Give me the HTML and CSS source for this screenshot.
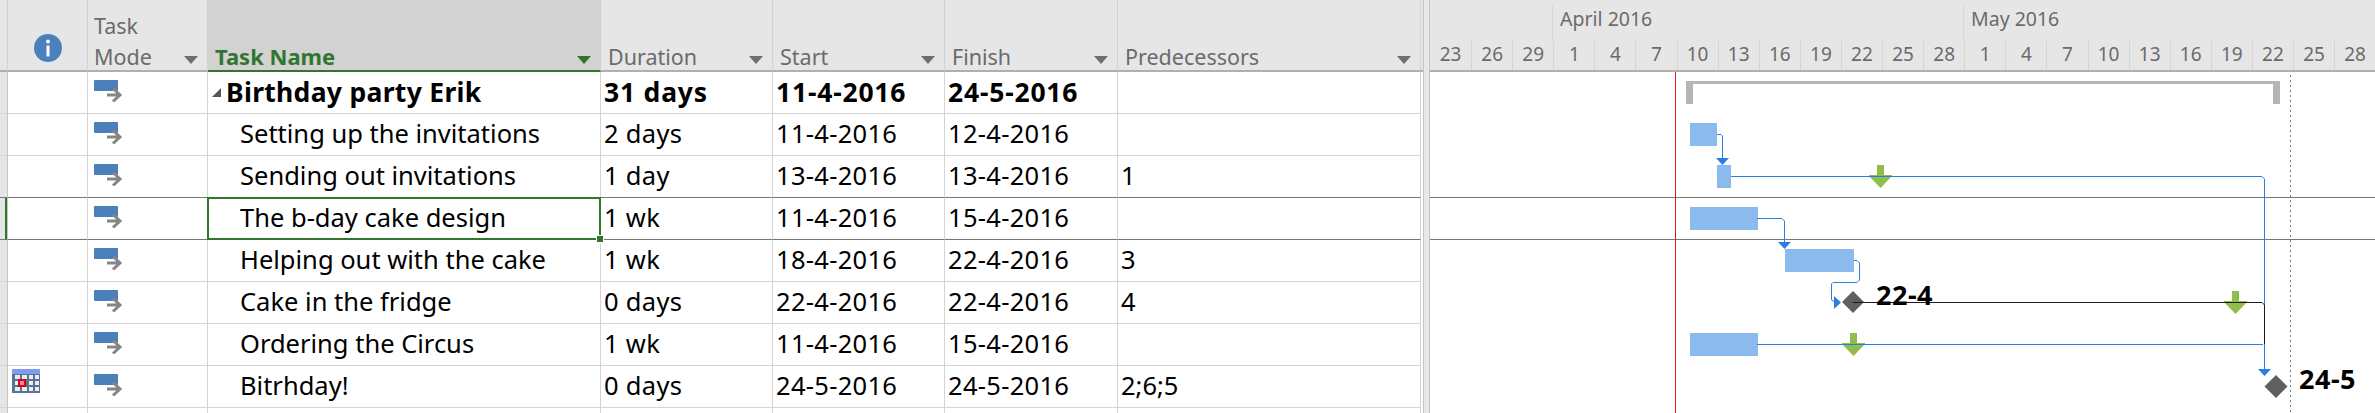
FILE: index.html
```html
<!DOCTYPE html>
<html lang="en">
<head>
<meta charset="utf-8">
<title>Birthday party Erik</title>
<link rel="stylesheet" href="styles.css">
</head>
<body>
<svg class="defs" width="0" height="0" aria-hidden="true">
  <symbol id="mode" viewBox="0 0 30 22">
    <rect x="0" y="0" width="24" height="11" rx="1" fill="#4a7fb9"/>
    <path d="M13 15H25M19 8.500L26 15L19 21.500" fill="none" stroke="#868686" stroke-width="3"/>
  </symbol>
</svg>
<main class="app">
  <section class="sheet">
    <div class="row head">
      <div class="cell gut"></div>
      <div class="cell info"><svg width="28" height="28" viewBox="0 0 28 28"><circle cx="14" cy="14" r="14" fill="#4a80bb"/><circle cx="14" cy="7.500" r="2" fill="#fff"/><rect x="12.500" y="11.500" width="3" height="11" fill="#fff"/></svg></div>
      <div class="cell hc mode-h"><span>Task<br>Mode</span><i class="tri"></i></div>
      <div class="cell hc name-h"><span>Task Name</span><i class="tri"></i></div>
      <div class="cell hc"><span>Duration</span><i class="tri"></i></div>
      <div class="cell hc"><span>Start</span><i class="tri"></i></div>
      <div class="cell hc"><span>Finish</span><i class="tri"></i></div>
      <div class="cell hc"><span>Predecessors</span><i class="tri"></i></div>
    </div>
    <div class="row summary">
      <div class="cell gut"></div><div class="cell"></div>
      <div class="cell m"><svg class="mi"><use href="#mode"/></svg></div>
      <div class="cell n sum-n"><i class="collapse"></i>Birthday party Erik</div>
      <div class="cell d">31 days</div><div class="cell d">11-4-2016</div><div class="cell d">24-5-2016</div><div class="cell p"></div>
    </div>
    <div class="row">
      <div class="cell gut"></div><div class="cell"></div>
      <div class="cell m"><svg class="mi"><use href="#mode"/></svg></div>
      <div class="cell n">Setting up the invitations</div>
      <div class="cell d">2 days</div><div class="cell d">11-4-2016</div><div class="cell d">12-4-2016</div><div class="cell p"></div>
    </div>
    <div class="row before-sel">
      <div class="cell gut"></div><div class="cell"></div>
      <div class="cell m"><svg class="mi"><use href="#mode"/></svg></div>
      <div class="cell n">Sending out invitations</div>
      <div class="cell d">1 day</div><div class="cell d">13-4-2016</div><div class="cell d">13-4-2016</div><div class="cell p">1</div>
    </div>
    <div class="row sel">
      <div class="cell gut"></div><div class="cell"></div>
      <div class="cell m"><svg class="mi"><use href="#mode"/></svg></div>
      <div class="cell n active">The b-day cake design</div>
      <div class="cell d">1 wk</div><div class="cell d">11-4-2016</div><div class="cell d">15-4-2016</div><div class="cell p"></div>
    </div>
    <div class="row">
      <div class="cell gut"></div><div class="cell"></div>
      <div class="cell m"><svg class="mi"><use href="#mode"/></svg></div>
      <div class="cell n">Helping out with the cake</div>
      <div class="cell d">1 wk</div><div class="cell d">18-4-2016</div><div class="cell d">22-4-2016</div><div class="cell p">3</div>
    </div>
    <div class="row">
      <div class="cell gut"></div><div class="cell"></div>
      <div class="cell m"><svg class="mi"><use href="#mode"/></svg></div>
      <div class="cell n">Cake in the fridge</div>
      <div class="cell d">0 days</div><div class="cell d">22-4-2016</div><div class="cell d">22-4-2016</div><div class="cell p">4</div>
    </div>
    <div class="row">
      <div class="cell gut"></div><div class="cell"></div>
      <div class="cell m"><svg class="mi"><use href="#mode"/></svg></div>
      <div class="cell n">Ordering the Circus</div>
      <div class="cell d">1 wk</div><div class="cell d">11-4-2016</div><div class="cell d">15-4-2016</div><div class="cell p"></div>
    </div>
    <div class="row">
      <div class="cell gut"></div>
      <div class="cell cal"><svg width="28" height="24" viewBox="0 0 28 24"><rect width="28" height="24" fill="#5c7390"/><rect width="28" height="5" fill="#7c9df0"/><g fill="#e9eef6"><rect x="3" y="6" width="5" height="4"/><rect x="10" y="6" width="5" height="4"/><rect x="17" y="6" width="4" height="4"/><rect x="23" y="6" width="4" height="4"/><rect x="3" y="12" width="3" height="4"/><rect x="17" y="12" width="4" height="4"/><rect x="23" y="12" width="4" height="4"/><rect x="3" y="18" width="5" height="4"/><rect x="10" y="18" width="5" height="4"/><rect x="17" y="18" width="4" height="4"/><rect x="23" y="18" width="4" height="4"/></g><rect x="6" y="10" width="8" height="8" fill="#d8001c"/><rect x="8" y="12" width="4" height="4" fill="#f58a8a"/></svg></div>
      <div class="cell m"><svg class="mi"><use href="#mode"/></svg></div>
      <div class="cell n">Bitrhday!</div>
      <div class="cell d">0 days</div><div class="cell d">24-5-2016</div><div class="cell d">24-5-2016</div><div class="cell p">2;6;5</div>
    </div>
    <div class="row">
      <div class="cell gut"></div><div class="cell"></div><div class="cell"></div><div class="cell"></div><div class="cell"></div><div class="cell"></div><div class="cell"></div><div class="cell"></div>
    </div>
  </section>
  <div class="divider"></div>
  <section class="gantt">
    <div class="scale">
      <div class="months">
        <div class="month blank"></div>
        <div class="month">April 2016</div>
        <div class="month">May 2016</div>
      </div>
      <div class="days">
        <span>23</span><span>26</span><span>29</span><span class="first">1</span><span>4</span><span>7</span><span>10</span><span>13</span><span>16</span><span>19</span><span>22</span><span>25</span><span>28</span><span class="first">1</span><span>4</span><span>7</span><span>10</span><span>13</span><span>16</span><span>19</span><span>22</span><span>25</span><span>28</span>
      </div>
    </div>
    <svg class="chart" width="945" height="341" viewBox="1430 72 945 341">
      <rect x="1430" y="197" width="945" height="1" fill="#767676"/>
      <rect x="1430" y="239" width="945" height="1" fill="#767676"/>
      <line x1="2290.500" y1="75" x2="2290.500" y2="413" stroke="#777" stroke-width="1" stroke-dasharray="2 3"/>
      <rect x="1675" y="72" width="1" height="341" fill="#e81a1a"/>

      <path d="M1686 104V81H2280V104H2273V84H1693V104Z" fill="#b5b5b5"/>

      <g fill="#8bbbed">
        <rect x="1690" y="123" width="27" height="23"/>
        <rect x="1717" y="165" width="14" height="23"/>
        <rect x="1690" y="207" width="68" height="23"/>
        <rect x="1785" y="249" width="69" height="23"/>
        <rect x="1690" y="333" width="68" height="23"/>
      </g>

      <g fill="#8fbe4c">
        <path d="M1877 165h7v10h8v1l-11.500 12-11.500-12v-1h8z"/>
        <path d="M1850 333h7v10h8v1l-11.500 12-11.500-12v-1h8z"/>
        <path d="M2232 291h7v10h8v1l-11.500 12-11.500-12v-1h8z"/>
      </g>

      <g fill="none" stroke="#2a7fdc" stroke-width="1">
        <path d="M1717 134.500H1721L1722.500 136V160"/>
        <path d="M1731 176.500H2262L2264.500 179V372"/>
        <path d="M1757 218.500H1782L1784.500 221V244"/>
        <path d="M1854 260.500H1857L1859.500 263V280L1857 282.500H1833L1831.500 284V300L1836 302.500"/>
        <path d="M1757 344.500H2263"/>
      </g>
      <path d="M1853 302.500H2262L2264.500 305V344" fill="none" stroke="#1c1c1c" stroke-width="1"/>

      <g fill="#2a7fdc">
        <path d="M1716 158H1729L1722.500 165Z"/>
        <path d="M1778 242H1791L1784.500 249Z"/>
        <path d="M2258 369H2271L2264.500 376Z"/>
        <path d="M1834 296L1841 302.500L1834 309Z"/>
      </g>

      <path d="M1853 291L1864 302L1853 313L1842 302Z" fill="#606060"/>
      <path d="M1853 302.500H1864" stroke="#1c1c1c" stroke-width="1"/>
      <path d="M2276 375L2287.500 386.500L2276 398L2264.500 386.500Z" fill="#606060"/>

      <text class="label" x="1876" y="305">22-4</text>
      <text class="label" x="2299" y="389">24-5</text>
    </svg>
  </section>
</main>
</body>
</html>
```

FILE: styles.css
```css
* { box-sizing: border-box; }
html, body { margin: 0; padding: 0; background: #fff; overflow: hidden; }
body { width: 2375px; height: 413px; font-family: "Noto Sans", "Liberation Sans", sans-serif; color: #000; }
.defs { position: absolute; }
.app { display: flex; width: 2375px; height: 413px; overflow: hidden; }

.sheet { width: 1421px; flex: none; }
.row {
  display: grid;
  grid-template-columns: 8px 80px 120px 393px 172px 172px 173px 303px;
  height: 42px;
}
.cell {
  border-right: 1px solid #d4d4d4;
  border-bottom: 1px solid #d4d4d4;
  display: flex;
  align-items: center;
  font-size: 25.500px;
  line-height: 34px;
  white-space: nowrap;
  min-width: 0;
}
.gut { background: #e6e6e6; border-right-color: #c6c6c6; }

.head { height: 72px; background: #e6e6e6; }
.head .cell {
  border-bottom: 2px solid #b0b0b0;
  border-right-color: #d2d2d2;
  font-size: 21.500px;
  color: #6b6b6b;
  line-height: 31px;
}
.hc { align-items: flex-end; justify-content: space-between; padding: 0 9px 0 7px; }
.hc span { margin-bottom: -2px; }
.tri {
  border-left: 7.500px solid transparent;
  border-right: 7.500px solid transparent;
  border-top: 8px solid #6e6e6e;
  margin-bottom: 6px;
  flex: none;
}
.info { justify-content: center; align-items: flex-start; padding-top: 34px; }
.name-h.name-h {
  background: #d2d2d2;
  color: #31752f;
  font-weight: 700;
  font-size: 22px;
  border-bottom-color: #31752f;
  padding-right: 9px;
}
.name-h .tri { border-top-color: #31752f; }
.mode-h { padding-left: 6px; }

.m { align-items: flex-start; padding: 8px 0 0 6px; }
.mi { width: 30px; height: 22px; }
.n { padding: 0 0 3px 32px; }
.d { padding: 0 0 3px 3px; letter-spacing: 0.300px; }
.p { padding: 0 0 3px 3px; }
.summary .cell { font-weight: 700; font-size: 26.500px; }
.summary .d { letter-spacing: 0.800px; padding-bottom: 2px; }
.summary .sum-n { padding: 0 0 2px 3px; letter-spacing: 0.300px; }
.collapse {
  width: 0; height: 0;
  border-bottom: 9px solid #555;
  border-left: 9px solid transparent;
  margin: 2px 5px 0 1px;
}

.before-sel .cell { border-bottom-color: #767676; }
.sel .cell { border-bottom-color: #767676; }
.sel .gut { box-shadow: inset -2px 0 0 #31752f; }
.active { position: relative; }
.active::before {
  content: "";
  position: absolute;
  left: -1px; right: -1px; top: -1px; bottom: -1px;
  border: 2px solid #31752f;
}
.active::after {
  content: "";
  position: absolute;
  right: -4px; bottom: -4px;
  width: 6px; height: 6px;
  background: #31752f;
  border: 1px solid #fff;
}
.cal { align-items: flex-start; padding: 3px 0 0 4px; }

.divider {
  width: 9px;
  flex: none;
  display: flex;
  justify-content: flex-end;
  background: linear-gradient(#e6e6e6 70px, #b0b0b0 70px, #b0b0b0 72px, #fff 72px);
}
.divider::after {
  content: "";
  width: 5px;
  background: #e8e8e8;
  border-left: 1px solid #c4c4c4;
  border-right: 1px solid #c4c4c4;
}

.gantt { width: 945px; flex: none; }
.scale { height: 72px; background: #e6e6e6; border-bottom: 2px solid #b0b0b0; }
.months { display: grid; grid-template-columns: 122px 411px 411px; height: 41px; }
.month {
  margin-top: 6px;
  border-left: 1px solid #d6d6d6;
  padding-left: 7px;
  font-size: 19.500px;
  line-height: 26px;
  color: #6b6b6b;
}
.month.blank { border-left: 0; }
.days { display: grid; grid-template-columns: repeat(23, 41.100px); height: 29px; }
.days span {
  border-left: 1px solid #d6d6d6;
  text-align: center;
  font-size: 19px;
  line-height: 26px;
  color: #6b6b6b;
}
.days span:first-child { border-left: 0; }
.chart { display: block; }
.label { font-family: "Noto Sans", sans-serif; font-weight: 700; font-size: 27px; letter-spacing: 0.500px; fill: #000; }
```
